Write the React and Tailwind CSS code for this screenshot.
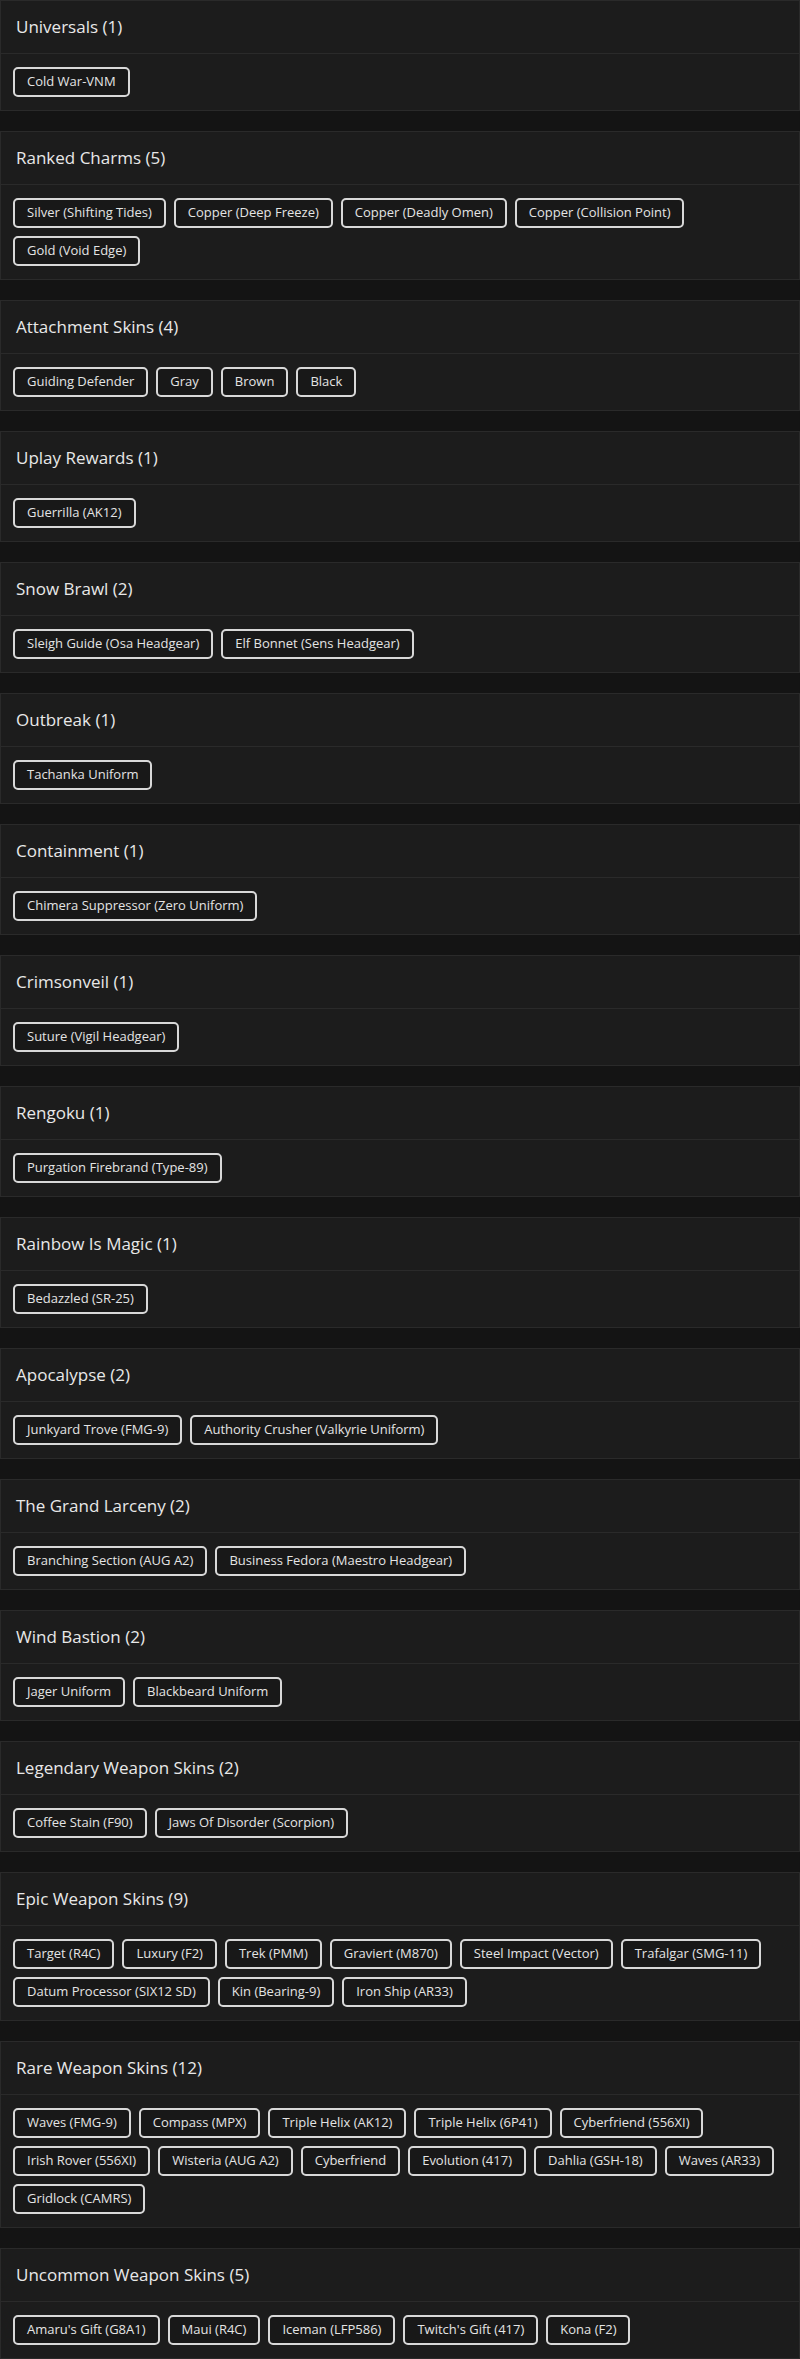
import React from "react";

const sections = [
  { title: "Universals", items: ["Cold War-VNM"] },
  {
    title: "Ranked Charms",
    items: [
      "Silver (Shifting Tides)",
      "Copper (Deep Freeze)",
      "Copper (Deadly Omen)",
      "Copper (Collision Point)",
      "Gold (Void Edge)",
    ],
  },
  { title: "Attachment Skins", items: ["Guiding Defender", "Gray", "Brown", "Black"] },
  { title: "Uplay Rewards", items: ["Guerrilla (AK12)"] },
  { title: "Snow Brawl", items: ["Sleigh Guide (Osa Headgear)", "Elf Bonnet (Sens Headgear)"] },
  { title: "Outbreak", items: ["Tachanka Uniform"] },
  { title: "Containment", items: ["Chimera Suppressor (Zero Uniform)"] },
  { title: "Crimsonveil", items: ["Suture (Vigil Headgear)"] },
  { title: "Rengoku", items: ["Purgation Firebrand (Type-89)"] },
  { title: "Rainbow Is Magic", items: ["Bedazzled (SR-25)"] },
  { title: "Apocalypse", items: ["Junkyard Trove (FMG-9)", "Authority Crusher (Valkyrie Uniform)"] },
  {
    title: "The Grand Larceny",
    items: ["Branching Section (AUG A2)", "Business Fedora (Maestro Headgear)"],
  },
  { title: "Wind Bastion", items: ["Jager Uniform", "Blackbeard Uniform"] },
  { title: "Legendary Weapon Skins", items: ["Coffee Stain (F90)", "Jaws Of Disorder (Scorpion)"] },
  {
    title: "Epic Weapon Skins",
    items: [
      "Target (R4C)",
      "Luxury (F2)",
      "Trek (PMM)",
      "Graviert (M870)",
      "Steel Impact (Vector)",
      "Trafalgar (SMG-11)",
      "Datum Processor (SIX12 SD)",
      "Kin (Bearing-9)",
      "Iron Ship (AR33)",
    ],
  },
  {
    title: "Rare Weapon Skins",
    items: [
      "Waves (FMG-9)",
      "Compass (MPX)",
      "Triple Helix (AK12)",
      "Triple Helix (6P41)",
      "Cyberfriend (556XI)",
      "Irish Rover (556XI)",
      "Wisteria (AUG A2)",
      "Cyberfriend",
      "Evolution (417)",
      "Dahlia (GSH-18)",
      "Waves (AR33)",
      "Gridlock (CAMRS)",
    ],
  },
  {
    title: "Uncommon Weapon Skins",
    items: ["Amaru's Gift (G8A1)", "Maui (R4C)", "Iceman (LFP586)", "Twitch's Gift (417)", "Kona (F2)"],
  },
];

const Section = ({ title, items }) => (
  <div className="border border-[#2a2a2a] bg-[#1c1c1c]">
    {/* Header */}
    <div className="h-[53px] flex items-center px-[15px] border-b border-[#2a2a2a]">
      <h2 className="text-[17px] font-medium text-[#e8e8e8]">
        {title} ({items.length})
      </h2>
    </div>

    {/* Items */}
    <div className="flex flex-wrap gap-2 px-3 py-[13px]">
      {items.map((item, i) => (
        <span
          key={i}
          className="h-[30px] flex items-center px-3 border-2 border-[#d8d8d8] rounded-[5px] bg-[#181818] text-[13px] text-[#e4e4e4] whitespace-nowrap"
        >
          {item}
        </span>
      ))}
    </div>
  </div>
);

export default function App() {
  return (
    <div
      className="min-h-screen bg-[#141414] flex flex-col gap-5"
      style={{ fontFamily: '"Open Sans", "Noto Sans", sans-serif' }}
    >
      {sections.map((s) => (
        <Section key={s.title} title={s.title} items={s.items} />
      ))}
    </div>
  );
}
